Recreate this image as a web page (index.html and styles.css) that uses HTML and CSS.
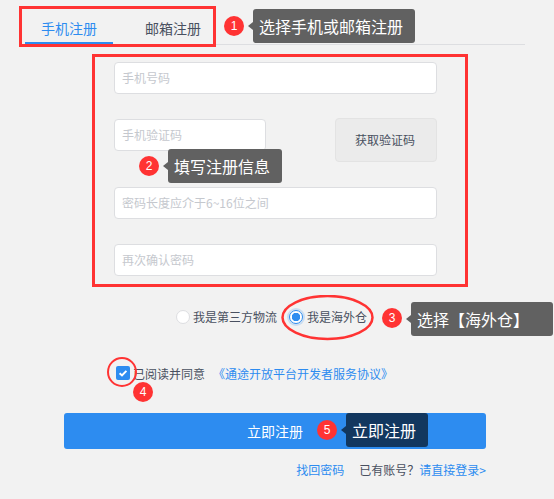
FILE: index.html
```html
<!DOCTYPE html>
<html lang="zh-CN">
<head>
<meta charset="utf-8">
<title>注册</title>
<link rel="stylesheet" href="styles.css">
</head>
<body>
<main class="page">
  <nav class="tabs">
    <a class="tab tab-active">手机注册</a>
    <a class="tab">邮箱注册</a>
  </nav>
  <form class="fields">
    <input class="field" placeholder="手机号码">
    <div class="code-row">
      <input class="field field-code" placeholder="手机验证码">
      <button type="button" class="code-btn">获取验证码</button>
    </div>
    <input class="field" placeholder="密码长度应介于6~16位之间">
    <input class="field" placeholder="再次确认密码">
  </form>
  <div class="radios">
    <label class="radio-item"><span class="radio"></span>我是第三方物流</label>
    <label class="radio-item"><span class="radio radio-on"></span>我是海外仓</label>
  </div>
  <div class="agree">
    <span class="check"><svg viewBox="0 0 14 14" width="14" height="14"><path d="M3.6 7.2 6 9.4 10.4 4.9" fill="none" stroke="#fff" stroke-width="2"/></svg></span>
    <span class="agree-text">已阅读并同意</span>
    <a class="link agree-link">《通途开放平台开发者服务协议》</a>
  </div>
  <button type="button" class="submit">立即注册</button>
  <div class="foot">
    <a class="link">找回密码</a>
    <span class="have">已有账号？<a class="link">请直接登录&gt;</a></span>
  </div>
</main>

<div class="mark mark-tabs"></div>
<div class="mark mark-form"></div>
<svg class="mark-ellipse" viewBox="0 0 95 46" width="95" height="46"><ellipse cx="47.5" cy="22.5" rx="45" ry="21.5" fill="none" stroke="#ff3333" stroke-width="2.5"/></svg>
<div class="mark-circle"></div>

<span class="badge b1">1</span>
<div class="tip t1">选择手机或邮箱注册</div>
<span class="badge b2">2</span>
<div class="tip t2">填写注册信息</div>
<span class="badge b3">3</span>
<div class="tip t3">选择【海外仓】</div>
<span class="badge b4">4</span>
<span class="badge b5">5</span>
<div class="tip tip-navy t5">立即注册</div>
</body>
</html>
```
FILE: styles.css
```css
* { box-sizing: border-box; }
html, body { margin: 0; padding: 0; }
body {
  width: 554px;
  height: 499px;
  overflow: hidden;
  position: relative;
  background: #f2f2f2;
  color: #495060;
  font-family: "Noto Sans CJK SC", "Liberation Sans", sans-serif;
  font-size: 12px;
}
.page { display: flex; flex-direction: column; }

.tabs {
  display: flex;
  height: 45px;
  margin: 0 29px 0 25px;
  border-bottom: 1px solid #dddee1;
}
.tab {
  width: 88px;
  height: 44px;
  padding-top: 18px;
  font-size: 14px;
  line-height: 20px;
  text-align: center;
  color: #495060;
}
.tab + .tab { margin-left: 16px; }
.tab-active { color: #2d8cf0; border-bottom: 2px solid #2d8cf0; }

.fields {
  display: flex;
  flex-direction: column;
  gap: 25px;
  width: 323px;
  margin: 17px 0 0 114px;
}
.field {
  display: block;
  width: 100%;
  height: 32px;
  padding: 0 7px 2px;
  border: 1px solid #dddee1;
  border-radius: 4px;
  background: #fff;
  font: 12px "Noto Sans CJK SC", sans-serif;
}
.field::placeholder { color: #c5c8ce; opacity: 1; }
.code-row { display: flex; justify-content: space-between; align-items: flex-start; margin-top: -1px; }
.field-code { width: 152px; margin-top: 1px; }
.code-btn {
  width: 102px;
  height: 44px;
  padding: 0 2px 2px 0;
  border: 1px solid #e3e3e3;
  border-radius: 4px;
  background: #ebebeb;
  color: #495060;
  font: 12px "Noto Sans CJK SC", sans-serif;
}

.radios { display: flex; margin: 33px 0 0 176px; height: 16px; align-items: center; }
.radio-item { display: flex; align-items: center; line-height: 16px; }
.radio-item + .radio-item { margin-left: 12px; }
.radio {
  width: 14px;
  height: 14px;
  margin-right: 3px;
  border: 1px solid #dddee1;
  border-radius: 50%;
  background: #fff;
}
.radio-on {
  margin-right: 4px;
  border-color: #2d8cf0;
  background: radial-gradient(circle, #2d8cf0 0 4px, #fff 4.5px);
  box-shadow: 0 0 0 2px rgba(45, 140, 240, .2);
}

.agree { display: flex; align-items: center; height: 18px; margin: 39px 0 0 116px; }
.check { width: 14px; height: 14px; border-radius: 2px; background: #2d8cf0; display: flex; }
.agree-text { margin-left: 3px; }
.agree-link { margin-left: 8px; }
.link { color: #2d8cf0; }

.submit {
  display: block;
  width: 422px;
  height: 36px;
  margin: 31px 0 0 64px;
  padding: 0;
  border: 0;
  border-radius: 3px;
  background: #2d8cf0;
  color: #fff;
  font: 14px "Noto Sans CJK SC", sans-serif;
}
.foot {
  display: flex;
  justify-content: flex-end;
  gap: 15px;
  width: 486px;
  margin-top: 12px;
  line-height: 18px;
}

.mark { position: absolute; border: 3px solid #ff3333; }
.mark-tabs { left: 19px; top: 6px; width: 197px; height: 41px; }
.mark-form { left: 92px; top: 54px; width: 376px; height: 233px; }
.mark-ellipse { position: absolute; left: 280px; top: 295px; }
.mark-circle {
  position: absolute;
  left: 107px;
  top: 357px;
  width: 30px;
  height: 30px;
  border: 2.5px solid #ff3333;
  border-radius: 50%;
}
.badge {
  position: absolute;
  width: 20px;
  height: 20px;
  border-radius: 50%;
  background: #ff3333;
  color: #fff;
  font: 12px/20px "Liberation Sans", sans-serif;
  text-align: center;
}
.b1 { left: 224px; top: 16px; }
.b2 { left: 139px; top: 156px; }
.b3 { left: 382px; top: 308px; }
.b4 { left: 133px; top: 382px; }
.b5 { left: 317px; top: 420px; }

.tip {
  position: absolute;
  height: 34px;
  padding: 0 6px;
  border-radius: 3px;
  background: #616161;
  color: #fff;
  font-size: 16px;
  line-height: 34px;
  white-space: nowrap;
}
.tip::before {
  content: "";
  position: absolute;
  left: -5px;
  top: 13px;
  border-style: solid;
  border-width: 4px 5px 4px 0;
  border-color: transparent #616161 transparent transparent;
}
.tip-navy { background: #12375f; }
.tip-navy::before { border-right-color: #12375f; }
.t1 { left: 253px; top: 9px; width: 162px; }
.t2 { left: 168px; top: 149px; width: 114px; }
.t3 { left: 411px; top: 302px; width: 142px; }
.t5 { left: 346px; top: 413px; width: 82px; }
```
